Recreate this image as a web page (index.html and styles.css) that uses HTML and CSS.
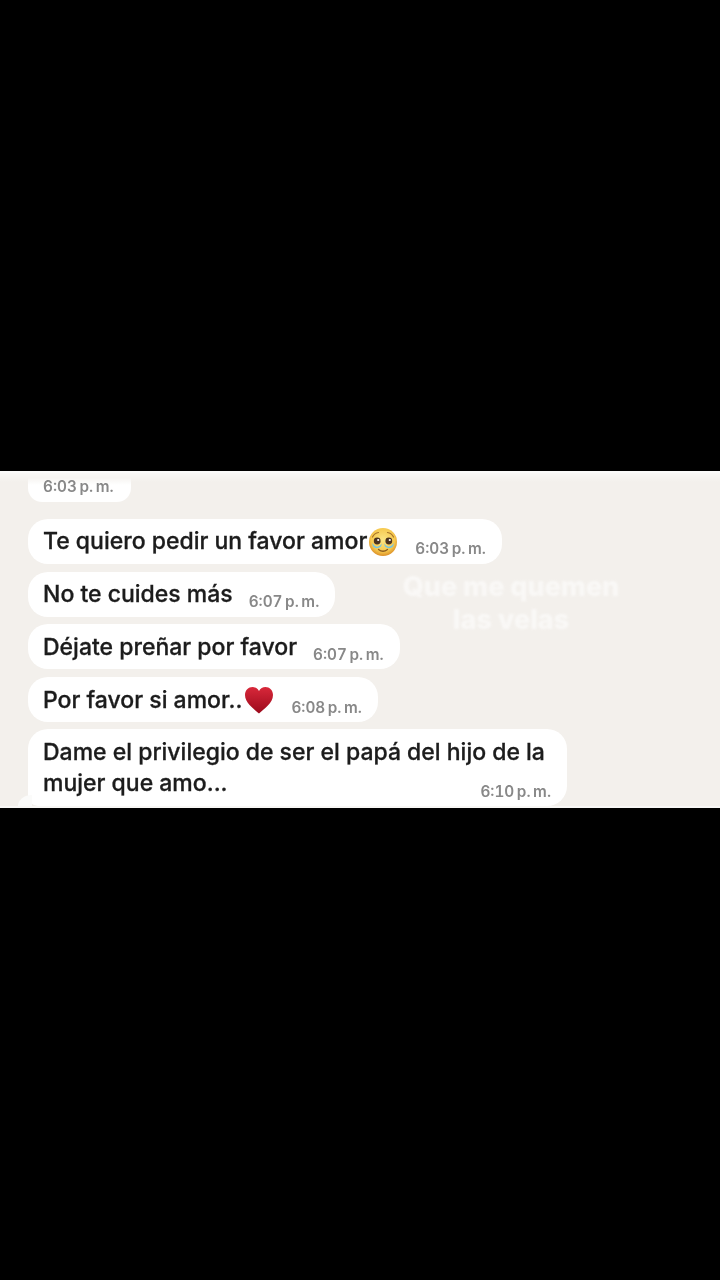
FILE: index.html
```html
<!DOCTYPE html>
<html lang="es">
<head>
    <meta charset="UTF-8">
    <meta name="viewport" content="width=device-width, initial-scale=1.0">
    <title>Chat</title>
    <link rel="stylesheet" href="styles.css">
</head>
<body>
    <div class="chat">
        <!-- Bubble cut off by the top of the crop -->
        <div class="bubble bubble-cut">
            <span class="time">6:03 p. m.</span>
        </div>

        <div class="bubble">
            <span class="text">Te quiero pedir un favor amor</span>
            <svg class="emoji" viewBox="0 0 30 30" aria-hidden="true">
                <defs>
                    <radialGradient id="face" cx="50%" cy="42%" r="58%">
                        <stop offset="0%" stop-color="#fbe584"/>
                        <stop offset="72%" stop-color="#f6c94f"/>
                        <stop offset="100%" stop-color="#dc8f26"/>
                    </radialGradient>
                </defs>
                <circle cx="15" cy="15" r="14" fill="url(#face)"/>
                <path d="M4.500 10 Q6.500 6 10.500 5.500 M25.500 10 Q23.500 6 19.500 5.500" fill="none" stroke="#a8742a" stroke-width="1.200" stroke-linecap="round"/>
                <path d="M4 16 Q9 23 14 16.500 L13 19.500 Q8.500 23 5 19.500 Z" fill="#74c6e4"/>
                <path d="M26 16 Q21 23 16 16.500 L17 19.500 Q21.500 23 25 19.500 Z" fill="#74c6e4"/>
                <circle cx="9.200" cy="14" r="3.400" fill="#4a3320"/>
                <circle cx="20.800" cy="14" r="3.400" fill="#4a3320"/>
                <circle cx="10.200" cy="13" r="1.100" fill="#fff"/>
                <circle cx="21.800" cy="13" r="1.100" fill="#fff"/>
                <path d="M10.500 22.500 Q15 26 19.500 22.500" fill="none" stroke="#8a5a1e" stroke-width="1.300" stroke-linecap="round"/>
            </svg>
            <span class="time time-gap-emoji">6:03 p. m.</span>
        </div>

        <div class="bubble">
            <span class="text">No te cuides más</span>
            <span class="time">6:07 p. m.</span>
        </div>

        <div class="bubble">
            <span class="text">Déjate preñar por favor</span>
            <span class="time">6:07 p. m.</span>
        </div>

        <div class="bubble">
            <span class="text">Por favor si amor..</span>
            <svg class="heart" viewBox="0 0 30 28" aria-hidden="true">
                <defs>
                    <linearGradient id="red" x1="0" y1="0" x2="0" y2="1">
                        <stop offset="0%" stop-color="#d8283a"/>
                        <stop offset="100%" stop-color="#9c0a1c"/>
                    </linearGradient>
                </defs>
                <path d="M15 27.500 C10 23 1 17 1 9 C1 4 4.500 1 8.500 1 C11.300 1 13.700 2.500 15 5 C16.300 2.500 18.700 1 21.500 1 C25.500 1 29 4 29 9 C29 17 20 23 15 27.500 Z" fill="url(#red)"/>
            </svg>
            <span class="time time-gap-emoji">6:08 p. m.</span>
        </div>

        <div class="bubble bubble-long">
            <div class="text">Dame el privilegio de ser el papá del hijo de la</div>
            <div class="long-foot">
                <span class="text">mujer que amo...</span>
                <span class="time">6:10 p. m.</span>
            </div>
        </div>

        <div class="sticker">Que me quemen<br>las velas</div>
    </div>
</body>
</html>
```

FILE: styles.css
```css
/* Cropped chat screenshot on a black page */
body {
    margin: 0;
    height: 1280px;
    background: #000;
    font-family: Inter, "Liberation Sans", sans-serif;
    overflow: hidden;
}

.chat {
    position: relative;
    margin-top: 471px;
    height: 337px;
    box-sizing: border-box;
    padding: 5px 0 0 28px;
    display: flex;
    flex-direction: column;
    align-items: flex-start;
    gap: 7.750px;
    background: linear-gradient(#f9f8f6, #f3f0ec 9px);
    border-top: 2px solid #fbfbfa;
    border-bottom: 2px solid #f8f7f5;
    overflow: hidden;
    filter: blur(0.35px);
}

.bubble {
    position: relative;
    height: 45px;
    box-sizing: border-box;
    padding: 1px 16px 0 15px;
    display: flex;
    align-items: center;
    background: #fff;
    border-radius: 20px;
}

.bubble-cut {
    height: 24px;
    margin-bottom: 9px;
    padding: 0 17px 8px 15px;
    border-radius: 0 0 14px 14px;
    background: linear-gradient(#f6f4f1, #fff 7px);
}

.bubble-long {
    display: block;
    width: 539px;
    height: 77px;
    padding-top: 8px;
    margin-top: -1px;
    border-bottom-left-radius: 10px;
}

.long-foot {
    display: flex;
    justify-content: space-between;
}

/* small tail of the last bubble */
.bubble-long::before {
    content: "";
    position: absolute;
    left: -10px;
    bottom: 0;
    width: 14px;
    height: 11px;
    background: #fbfbfa;
    border-radius: 100% 0 0 0;
}

.text {
    font-size: 23px;
    line-height: 31px;
    font-weight: 500;
    color: #1c1c1c;
    -webkit-text-stroke: 0.3px #1c1c1c;
    white-space: nowrap;
}

.time {
    margin: 14px 0 0 16px;
    font-size: 15.300px;
    word-spacing: -1.500px;
    font-weight: 600;
    font-variant-numeric: tabular-nums;
    color: #888;
    white-space: nowrap;
}

.bubble-cut .time {
    margin: 0;
}

.long-foot .time {
    margin-top: 14px;
}

.time-gap-emoji {
    margin-left: 17px;
}

.emoji {
    width: 30px;
    height: 30px;
    margin-left: 1px;
}

.heart {
    width: 30px;
    height: 28px;
    margin-left: 2px;
}

/* faint white caption over the screenshot */
.sticker {
    position: absolute;
    left: 402px;
    top: 97px;
    width: 218px;
    text-align: center;
    font-size: 27px;
    line-height: 33px;
    font-weight: 800;
    color: #fff;
    opacity: 0.55;
    filter: blur(1px);
    white-space: nowrap;
}
```
